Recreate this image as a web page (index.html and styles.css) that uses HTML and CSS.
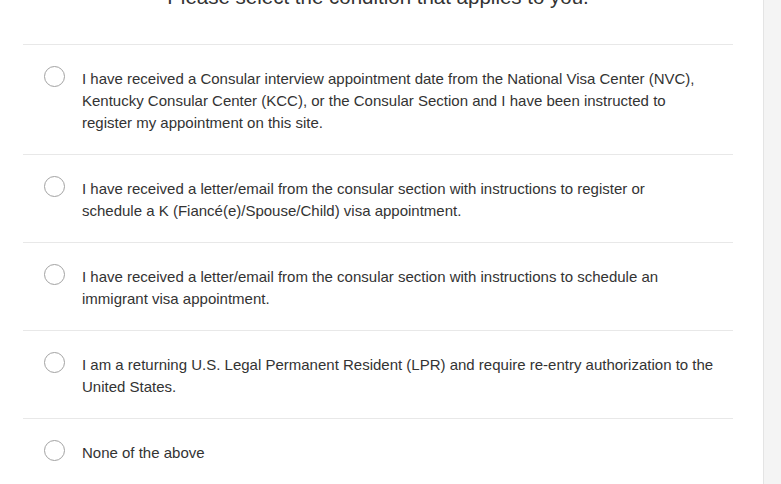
FILE: index.html
```html
<!DOCTYPE html>
<html>
<head>
<meta charset="utf-8">
<title>Select condition</title>
<link rel="stylesheet" href="styles.css">
</head>
<body>
	<div id="page">
		<div id="content">
			<h2 class="title">Please select the condition that applies to you.</h2>
			<label class="option">
				<span class="radio"></span>
				<span class="text">I have received a Consular interview appointment date from the National Visa Center (NVC), Kentucky Consular Center (KCC), or the Consular Section and I have been instructed to register my appointment on this site.</span>
			</label>
			<label class="option">
				<span class="radio"></span>
				<span class="text">I have received a letter/email from the consular section with instructions to register or <span class="keep">schedule a K</span> (Fiancé(e)/Spouse/Child) visa appointment.</span>
			</label>
			<label class="option">
				<span class="radio"></span>
				<span class="text">I have received a letter/email from the consular section with instructions to schedule an immigrant visa appointment.</span>
			</label>
			<label class="option">
				<span class="radio"></span>
				<span class="text">I am a returning U.S. Legal Permanent Resident (LPR) and require re-entry authorization to the United States.</span>
			</label>
			<label class="option">
				<span class="radio"></span>
				<span class="text">None of the above</span>
			</label>
		</div>
		<div id="side"></div>
	</div>
</body>
</html>
```

FILE: styles.css
```css
html, body {
	margin: 0;
	height: 100%;
	background: #fff;
	font-family: "Liberation Sans", Arial, sans-serif;
	color: #333;
	overflow: hidden;
}

#page {
	display: flex;
	height: 100%;
}

#content {
	width: 710px;
	padding: 0 30px 0 23px;
}

#side {
	flex: 1;
	background: #f4f4f4;
	border-left: 1px solid #e4e4e4;
}

.title {
	margin: -17px 0 0;
	padding-bottom: 33px;
	font-size: 20.5px;
	font-weight: normal;
	line-height: 28px;
	text-align: center;
}

.option {
	display: flex;
	align-items: flex-start;
	border-top: 1px solid #e8e8e8;
	padding: 23px 0 20px;
	font-size: 15px;
	line-height: 22px;
	cursor: pointer;
}

.radio {
	flex: none;
	width: 21px;
	height: 21px;
	margin: -2px 17px 0 21px;
	border: 1px solid #a2a2a2;
	border-radius: 50%;
	box-sizing: border-box;
}

.text {
	flex: 1;
	padding-right: 17px;
}

.keep {
	white-space: nowrap;
}
```
